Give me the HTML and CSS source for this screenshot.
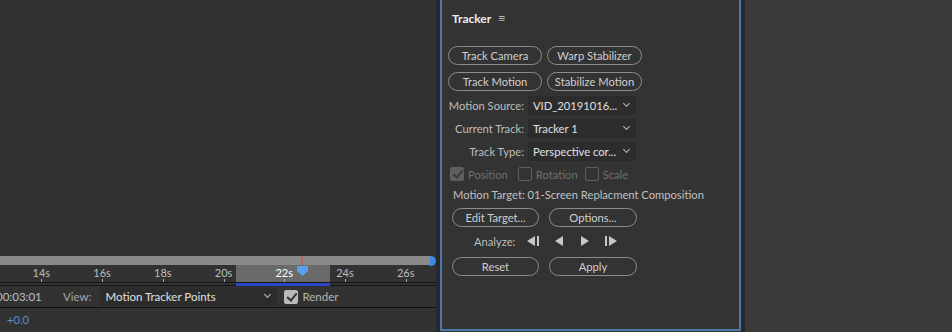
FILE: index.html
```html
<!DOCTYPE html>
<html lang="en">
  <head>
    <meta charset="UTF-8" />
    <title>Tracker</title>
    <link rel="stylesheet" href="styles.css">
  </head>
  <body>
    <section class="timeline">
      <div class="ruler">
        <div class="bar"><span class="marker"></span><span class="end"></span></div>
        <div class="ticks">
          <span>14s</span><span>16s</span><span>18s</span><span>20s</span>
          <span class="now">22s</span><span>24s</span><span>26s</span>
        </div>
        <div class="work"></div>
        <div class="playhead"></div>
      </div>
      <div class="viewrow">
        <span class="time">00:03:01</span>
        <span class="label">View:</span>
        <div class="select wide">Motion Tracker Points<i class="chev"></i></div>
        <span class="check on"></span>
        <span class="label">Render</span>
      </div>
      <div class="offset">+0.0</div>
    </section>

    <div class="divider"></div>

    <main class="panel">
      <header class="title">Tracker <span class="menu">&#8801;</span></header>

      <div class="btngrid">
        <button class="pill">Track Camera</button>
        <button class="pill">Warp Stabilizer</button>
        <button class="pill">Track Motion</button>
        <button class="pill">Stabilize Motion</button>
      </div>

      <div class="fields">
        <span class="fl">Motion Source:</span>
        <div class="select">VID_20191016...<i class="chev"></i></div>
        <span class="fl">Current Track:</span>
        <div class="select">Tracker 1<i class="chev"></i></div>
        <span class="fl">Track Type:</span>
        <div class="select">Perspective cor...<i class="chev"></i></div>
      </div>

      <div class="checks">
        <span class="check on dim"></span><span>Position</span>
        <span class="check dim rot"></span><span>Rotation</span>
        <span class="check dim scale"></span><span>Scale</span>
      </div>

      <div class="target">Motion Target: 01-Screen Replacment Composition</div>

      <div class="btnrow">
        <button class="pill">Edit Target...</button>
        <button class="pill">Options...</button>
      </div>

      <div class="analyze">
        <span>Analyze:</span>
        <svg width="14" height="12" viewBox="0 0 14 12"><path d="M9 1v10L1 6z" /><rect x="11" y="1" width="2" height="10" /></svg>
        <svg width="10" height="12" viewBox="0 0 10 12"><path d="M9 1v10L1 6z" /></svg>
        <svg width="10" height="12" viewBox="0 0 10 12"><path d="M1 1v10l8-5z" /></svg>
        <svg width="14" height="12" viewBox="0 0 14 12"><rect x="1" y="1" width="2" height="10" /><path d="M5 1v10l8-5z" /></svg>
      </div>

      <div class="btnrow last">
        <button class="pill">Reset</button>
        <button class="pill">Apply</button>
      </div>
    </main>

    <div class="divider"></div>
    <section class="rest"></section>
  </body>
</html>
```

FILE: styles.css
```css
:root {
  --bg: #323232;
  --text: #cfcfcf;
  --dim: #6f6f6f;
  --blue: #4d78aa;
  --font: Lato, "Open Sans", Arial, sans-serif;
}

* {
  box-sizing: border-box;
}

html,
body {
  height: 100%;
  margin: 0;
}

body {
  display: flex;
  background: var(--bg);
  font-family: var(--font);
  font-size: 11.2px;
  color: var(--text);
  overflow: hidden;
}

/* left side: timeline */
.timeline {
  width: 436px;
  display: flex;
  flex-direction: column;
  justify-content: flex-end;
  overflow: hidden;
}

.ruler {
  position: relative;
  height: 27px;
}

.bar {
  position: relative;
  height: 9px;
  background: #8a8a8a;
  margin-right: 4px;
}

.bar .marker {
  position: absolute;
  left: 301px;
  top: 0;
  width: 2px;
  height: 9px;
  background: #c0606a;
}

.bar .end {
  position: absolute;
  right: -4px;
  top: 0;
  width: 6px;
  height: 10px;
  border-radius: 0 5px 5px 0;
  background: #3f8ae8;
}

.ticks {
  display: flex;
  padding-left: 11px;
  height: 18px;
  border-bottom: 1px solid #151515;
  position: relative;
  z-index: 1;
}

.ticks span {
  width: 62px;
  text-align: center;
  color: #bdbdbd;
  font-size: 11px;
  line-height: 16px;
  position: relative;
}

.ticks span::after {
  content: "";
  position: absolute;
  left: 50%;
  bottom: 0;
  width: 1px;
  height: 3px;
  background: #aaa;
}

.ticks .now {
  color: #fff;
}

.work {
  position: absolute;
  left: 236px;
  top: 9px;
  width: 94px;
  height: 21px;
  background: #6a6a6a;
  border-bottom: 4px solid #2d46c8;
}

.playhead {
  position: absolute;
  left: 297px;
  top: 10px;
  width: 11px;
  height: 10px;
  background: #5aa0f0;
  clip-path: polygon(0 0, 100% 0, 100% 50%, 50% 100%, 0 50%);
  z-index: 2;
}

.viewrow {
  display: flex;
  align-items: center;
  height: 23px;
  margin-top: 2px;
  border-top: 1px solid #151515;
  border-bottom: 1px solid #111;
  gap: 7px;
  margin-left: -4px;
  font-size: 11.5px;
}

.viewrow .time {
  width: 60px;
  color: #bdbdbd;
}

.label {
  color: #a9a9a9;
}

.viewrow .label:last-child {
  margin-left: -3px;
  color: #b5b5b5;
}

.select {
  position: relative;
  height: 19px;
  line-height: 19px;
  padding: 0 20px 0 5px;
  background: #2c2c2c;
  color: #e0e0e0;
  white-space: nowrap;
  overflow: hidden;
}

.select.wide {
  width: 177px;
  margin-left: 2px;
}

.chev {
  position: absolute;
  right: 7px;
  top: 5px;
  width: 5px;
  height: 5px;
  border-right: 1.4px solid #bbb;
  border-bottom: 1.4px solid #bbb;
  transform: rotate(45deg);
}

.check {
  position: relative;
  width: 14px;
  height: 14px;
  border: 1.5px solid #777;
  border-radius: 2px;
  flex: none;
}

.check.on {
  background: #b9b9b9;
  border-color: #b9b9b9;
}

.check.on::after {
  content: "";
  position: absolute;
  left: 3.5px;
  top: 0px;
  width: 4px;
  height: 8px;
  border-right: 2px solid #333;
  border-bottom: 2px solid #333;
  transform: rotate(40deg);
}

.check.dim {
  border-color: #5e5e5e;
}

.check.on.dim {
  background: #5e5e5e;
}

.check.on.dim::after {
  border-color: #3a3a3a;
}

.offset {
  height: 24px;
  line-height: 24px;
  padding-left: 7px;
  color: #5b8fd0;
}

.divider {
  width: 4px;
  background: #282828;
}

/* tracker panel */
.panel {
  width: 301px;
  height: 331px;
  border: 2px solid var(--blue);
  border-top: 0;
  padding: 10px 6px 0 6px;
  background: #333;
}

.title {
  color: #ececec;
  font-size: 12px;
  font-weight: 700;
  padding-left: 4px;
  height: 36px;
}

.menu {
  font-weight: 400;
  font-size: 13px;
  margin-left: 4px;
  color: #bbb;
}

.btngrid {
  display: grid;
  grid-template-columns: 94px 95px;
  gap: 7px 5px;
}

.pill {
  height: 19px;
  padding: 0;
  border: 1.5px solid #8c8c8c;
  border-radius: 10px;
  background: transparent;
  color: var(--text);
  font-family: var(--font);
  font-size: 11.2px;
  line-height: 15px;
}

.fields {
  display: grid;
  grid-template-columns: 76px 108px;
  gap: 4px 4px;
  margin-top: 5px;
  align-items: center;
}

.fl {
  text-align: right;
  color: #bdbdbd;
  white-space: nowrap;
}

.checks {
  display: flex;
  align-items: center;
  gap: 4px;
  margin-top: 4px;
  height: 18px;
  color: var(--dim);
  padding-left: 2px;
}

.checks .rot {
  margin-left: 6px;
}

.checks .scale {
  margin-left: 3px;
}

.target {
  margin-top: 2px;
  padding-left: 5px;
  color: #c0c0c0;
  height: 19px;
  line-height: 19px;
}

.btnrow {
  display: flex;
  gap: 10px;
  padding-left: 4px;
  margin-top: 4px;
}

.btnrow.last {
  margin-top: 5px;
}

.btnrow .pill {
  width: 87px;
}

.btnrow .pill:last-child {
  width: 88px;
}

.analyze {
  display: flex;
  align-items: center;
  height: 22px;
  margin: 3px 0 0 26px;
  gap: 14px;
  color: #bdbdbd;
}

.analyze span {
  margin-right: -3px;
}

.analyze svg:nth-child(4) {
  margin-left: 2px;
}

.analyze svg {
  fill: #c8c8c8;
}

.rest {
  flex: 1;
  background: #3a3a3a;
}
```
